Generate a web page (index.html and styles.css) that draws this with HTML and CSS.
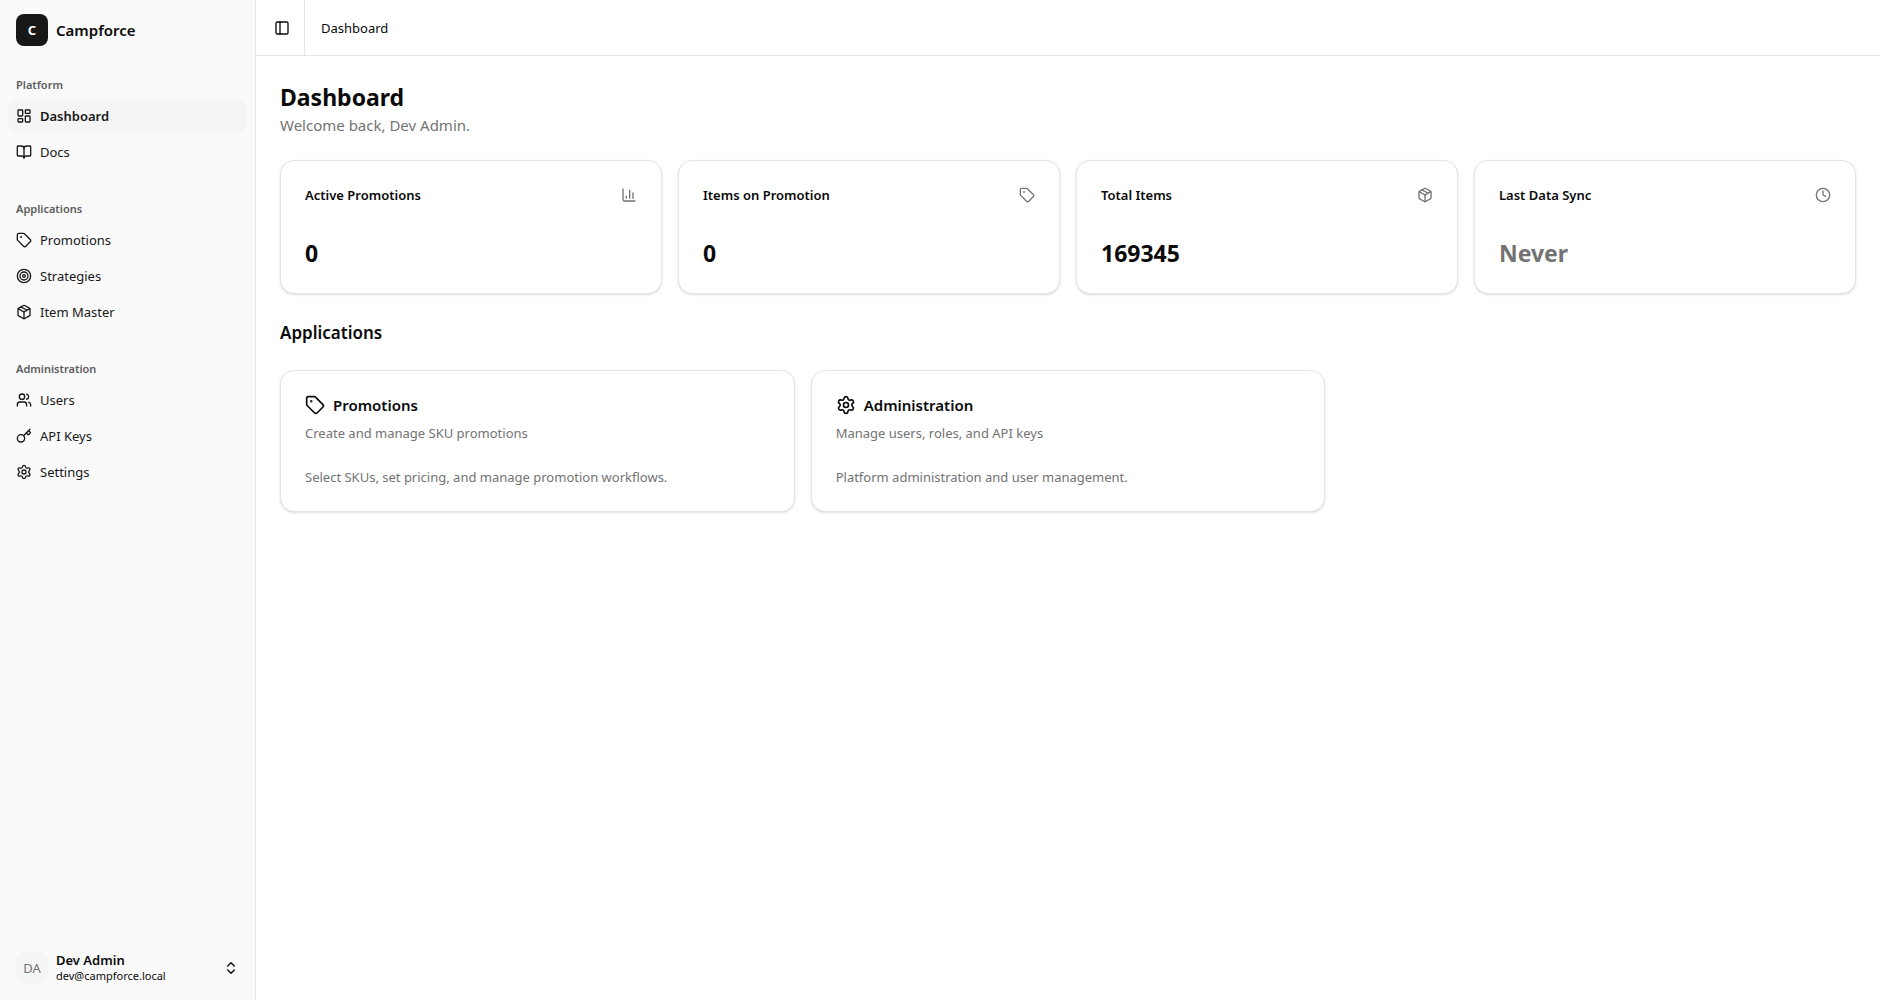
FILE: index.html
```html
<!DOCTYPE html>
<html lang="en">
  <head>
    <meta charset="UTF-8" />
    <meta name="viewport" content="width=device-width, initial-scale=1.0" />
    <title>Dashboard - Campforce</title>
    <link rel="stylesheet" href="styles.css">
  </head>
  <body>
    <!-- icons used more than once -->
    <svg class="sprite" aria-hidden="true">
      <symbol id="icon-tag" viewBox="0 0 24 24">
        <path d="M12.586 2.586A2 2 0 0 0 11.172 2H4a2 2 0 0 0-2 2v7.172a2 2 0 0 0 .586 1.414l8.704 8.704a2.426 2.426 0 0 0 3.42 0l6.58-6.58a2.426 2.426 0 0 0 0-3.42z" />
        <circle cx="7.5" cy="7.5" r=".5" fill="currentColor" />
      </symbol>
      <symbol id="icon-package" viewBox="0 0 24 24">
        <path d="M11 21.73a2 2 0 0 0 2 0l7-4A2 2 0 0 0 21 16V8a2 2 0 0 0-1-1.73l-7-4a2 2 0 0 0-2 0l-7 4A2 2 0 0 0 3 8v8a2 2 0 0 0 1 1.73z" />
        <path d="M12 22V12" />
        <path d="M3.29 7 12 12l8.71-5" />
        <path d="m7.5 4.27 9 5.15" />
      </symbol>
      <symbol id="icon-settings" viewBox="0 0 24 24">
        <path d="M9.671 4.136a2.34 2.34 0 0 1 4.659 0 2.34 2.34 0 0 0 3.319 1.915 2.34 2.34 0 0 1 2.33 4.033 2.34 2.34 0 0 0 0 3.831 2.34 2.34 0 0 1-2.33 4.033 2.34 2.34 0 0 0-3.319 1.915 2.34 2.34 0 0 1-4.659 0 2.34 2.34 0 0 0-3.32-1.915 2.34 2.34 0 0 1-2.33-4.033 2.34 2.34 0 0 0 0-3.831A2.34 2.34 0 0 1 6.35 6.051a2.34 2.34 0 0 0 3.319-1.915" />
        <circle cx="12" cy="12" r="3" />
      </symbol>
    </svg>

    <div class="app">
      <aside class="sidebar">
        <a href="#" class="brand">
          <span class="brand-logo">C</span>
          <span class="brand-name">Campforce</span>
        </a>

        <nav class="sidebar-nav">
          <div class="nav-group">
            <h2 class="nav-label">Platform</h2>
            <a href="#" class="nav-item active" aria-current="page">
              <svg class="icon" viewBox="0 0 24 24">
                <rect width="7" height="9" x="3" y="3" rx="1" />
                <rect width="7" height="5" x="14" y="3" rx="1" />
                <rect width="7" height="9" x="14" y="12" rx="1" />
                <rect width="7" height="5" x="3" y="16" rx="1" />
              </svg>
              <span>Dashboard</span>
            </a>
            <a href="#" class="nav-item">
              <svg class="icon" viewBox="0 0 24 24">
                <path d="M12 7v14" />
                <path d="M3 18a1 1 0 0 1-1-1V4a1 1 0 0 1 1-1h5a4 4 0 0 1 4 4 4 4 0 0 1 4-4h5a1 1 0 0 1 1 1v13a1 1 0 0 1-1 1h-6a3 3 0 0 0-3 3 3 3 0 0 0-3-3z" />
              </svg>
              <span>Docs</span>
            </a>
          </div>

          <div class="nav-group">
            <h2 class="nav-label">Applications</h2>
            <a href="#" class="nav-item">
              <svg class="icon"><use href="#icon-tag" /></svg>
              <span>Promotions</span>
            </a>
            <a href="#" class="nav-item">
              <svg class="icon" viewBox="0 0 24 24">
                <circle cx="12" cy="12" r="10" />
                <circle cx="12" cy="12" r="6" />
                <circle cx="12" cy="12" r="2" />
              </svg>
              <span>Strategies</span>
            </a>
            <a href="#" class="nav-item">
              <svg class="icon"><use href="#icon-package" /></svg>
              <span>Item Master</span>
            </a>
          </div>

          <div class="nav-group">
            <h2 class="nav-label">Administration</h2>
            <a href="#" class="nav-item">
              <svg class="icon" viewBox="0 0 24 24">
                <path d="M16 21v-2a4 4 0 0 0-4-4H6a4 4 0 0 0-4 4v2" />
                <path d="M16 3.128a4 4 0 0 1 0 7.744" />
                <path d="M22 21v-2a4 4 0 0 0-3-3.87" />
                <circle cx="9" cy="7" r="4" />
              </svg>
              <span>Users</span>
            </a>
            <a href="#" class="nav-item">
              <svg class="icon" viewBox="0 0 24 24">
                <path d="m15.5 7.5 2.3 2.3a1 1 0 0 0 1.4 0l2.1-2.1a1 1 0 0 0 0-1.4L19 4" />
                <path d="m21 2-9.6 9.6" />
                <circle cx="7.5" cy="15.5" r="5.5" />
              </svg>
              <span>API Keys</span>
            </a>
            <a href="#" class="nav-item">
              <svg class="icon"><use href="#icon-settings" /></svg>
              <span>Settings</span>
            </a>
          </div>
        </nav>

        <button type="button" class="user-menu">
          <span class="avatar">DA</span>
          <span class="user-info">
            <span class="user-name">Dev Admin</span>
            <span class="user-email">dev@campforce.local</span>
          </span>
          <svg class="icon" viewBox="0 0 24 24">
            <path d="m7 15 5 5 5-5" />
            <path d="m7 9 5-5 5 5" />
          </svg>
        </button>
      </aside>

      <div class="main">
        <header class="topbar">
          <div class="topbar-toggle">
            <button type="button" class="toggle-btn" aria-label="Toggle Sidebar">
              <svg class="icon" viewBox="0 0 24 24">
                <rect width="18" height="18" x="3" y="3" rx="2" />
                <path d="M9 3v18" />
              </svg>
            </button>
          </div>
          <nav class="breadcrumb" aria-label="Breadcrumb">Dashboard</nav>
        </header>

        <main class="content">
          <div class="page-heading">
            <h1>Dashboard</h1>
            <p>Welcome back, Dev Admin.</p>
          </div>

          <section class="stats">
            <div class="card stat">
              <div class="stat-header">
                <h3>Active Promotions</h3>
                <svg class="icon" viewBox="0 0 24 24">
                  <path d="M3 3v16a2 2 0 0 0 2 2h16" />
                  <path d="M18 17V9" />
                  <path d="M13 17V5" />
                  <path d="M8 17v-3" />
                </svg>
              </div>
              <p class="stat-value">0</p>
            </div>
            <div class="card stat">
              <div class="stat-header">
                <h3>Items on Promotion</h3>
                <svg class="icon"><use href="#icon-tag" /></svg>
              </div>
              <p class="stat-value">0</p>
            </div>
            <div class="card stat">
              <div class="stat-header">
                <h3>Total Items</h3>
                <svg class="icon"><use href="#icon-package" /></svg>
              </div>
              <p class="stat-value">169345</p>
            </div>
            <div class="card stat">
              <div class="stat-header">
                <h3>Last Data Sync</h3>
                <svg class="icon" viewBox="0 0 24 24">
                  <circle cx="12" cy="12" r="10" />
                  <path d="M12 6v6l4 2" />
                </svg>
              </div>
              <p class="stat-value muted">Never</p>
            </div>
          </section>

          <h2 class="section-title">Applications</h2>

          <section class="apps">
            <a href="#" class="card app-card">
              <h3 class="app-title">
                <svg class="icon icon-lg"><use href="#icon-tag" /></svg>
                Promotions
              </h3>
              <p>Create and manage SKU promotions</p>
              <p class="app-text">Select SKUs, set pricing, and manage promotion workflows.</p>
            </a>
            <a href="#" class="card app-card">
              <h3 class="app-title">
                <svg class="icon icon-lg"><use href="#icon-settings" /></svg>
                Administration
              </h3>
              <p>Manage users, roles, and API keys</p>
              <p class="app-text">Platform administration and user management.</p>
            </a>
          </section>
        </main>
      </div>
    </div>
  </body>
</html>
```
FILE: styles.css
```css
* {
  margin: 0;
  padding: 0;
  box-sizing: border-box;
}

body {
  font-family: "Segoe UI", "Noto Sans", "Open Sans", sans-serif;
  font-size: 13px;
  line-height: 20px;
  color: #0a0a0a;
  background-color: #ffffff;
}

a {
  color: inherit;
  text-decoration: none;
}

button {
  font: inherit;
  color: inherit;
  background: none;
  border: none;
  cursor: pointer;
}

.sprite {
  display: none;
}

.icon {
  width: 16px;
  height: 16px;
  flex-shrink: 0;
  fill: none;
  stroke: currentColor;
  stroke-width: 2;
  stroke-linecap: round;
  stroke-linejoin: round;
}

.icon-lg {
  width: 20px;
  height: 20px;
}

.app {
  display: flex;
  min-height: 100vh;
}

/* Sidebar */
.sidebar {
  display: flex;
  flex-direction: column;
  flex-shrink: 0;
  width: 256px;
  background-color: #fafafa;
  border-right: 1px solid #e5e5e5;
}

.brand {
  display: flex;
  align-items: center;
  gap: 8px;
  padding: 14px 16px;
}

.brand-logo,
.avatar {
  display: flex;
  align-items: center;
  justify-content: center;
  width: 32px;
  height: 32px;
  border-radius: 8px;
}

.brand-logo {
  background-color: #171717;
  color: #fafafa;
  font-weight: 700;
}

.brand-name {
  font-size: 15px;
  font-weight: 600;
}

.sidebar-nav {
  display: flex;
  flex-direction: column;
  flex: 1;
  gap: 8px;
}

.nav-group {
  display: flex;
  flex-direction: column;
  gap: 4px;
  padding: 8px;
}

.nav-label {
  height: 28px;
  padding: 0 8px;
  font-size: 11px;
  font-weight: 600;
  line-height: 34px;
  color: #5c5c5c;
}

.nav-item {
  display: flex;
  align-items: center;
  gap: 8px;
  height: 32px;
  padding: 0 8px;
  border-radius: 8px;
  color: #171717;
}

.nav-item:hover,
.nav-item.active {
  background-color: #f5f5f5;
}

.nav-item.active {
  font-weight: 600;
}

.user-menu {
  display: flex;
  align-items: center;
  gap: 8px;
  margin: 8px;
  padding: 8px;
  border-radius: 8px;
  text-align: left;
}

.avatar {
  background-color: #f5f5f5;
  color: #737373;
}

.user-info {
  display: flex;
  flex-direction: column;
  flex: 1;
  line-height: 16px;
}

.user-name {
  font-weight: 600;
}

.user-email {
  font-size: 11px;
}

/* Main area */
.main {
  display: flex;
  flex-direction: column;
  flex: 1;
  min-width: 0;
}

.topbar {
  display: flex;
  height: 56px;
  border-bottom: 1px solid #e5e5e5;
}

.topbar-toggle {
  display: flex;
  align-items: center;
  padding: 0 8px 0 12px;
  border-right: 1px solid #e5e5e5;
}

.toggle-btn {
  display: flex;
  align-items: center;
  justify-content: center;
  width: 28px;
  height: 28px;
  border-radius: 6px;
}

.toggle-btn:hover {
  background-color: #f5f5f5;
}

.breadcrumb {
  display: flex;
  align-items: center;
  padding: 0 16px;
}

.content {
  display: flex;
  flex-direction: column;
  gap: 24px;
  padding: 24px;
}

.page-heading h1 {
  font-size: 23px;
  font-weight: 700;
  line-height: 34px;
}

.page-heading p {
  font-size: 15px;
  line-height: 22px;
  color: #737373;
}

.card {
  padding: 24px;
  border: 1px solid #e5e5e5;
  border-radius: 14px;
  background-color: #ffffff;
  box-shadow: 0 1px 3px rgba(0, 0, 0, 0.1), 0 1px 2px -1px rgba(0, 0, 0, 0.1);
}

.stats {
  display: grid;
  grid-template-columns: repeat(4, 1fr);
  gap: 16px;
}

.stat {
  display: flex;
  flex-direction: column;
  gap: 32px;
}

.stat-header {
  display: flex;
  align-items: center;
  justify-content: space-between;
}

.stat-header h3 {
  font-size: 13px;
  font-weight: 600;
}

.stat-header .icon {
  color: #737373;
}

.stat-value {
  font-size: 23px;
  font-weight: 700;
  line-height: 32px;
}

.muted {
  color: #737373;
}

.section-title {
  padding-top: 2px;
  font-size: 17px;
  font-weight: 600;
  line-height: 26px;
}

.apps {
  display: grid;
  grid-template-columns: repeat(3, 1fr);
  gap: 16px;
}

.app-card {
  display: flex;
  flex-direction: column;
  color: #737373;
}

.app-title {
  display: flex;
  align-items: center;
  gap: 8px;
  margin-bottom: 8px;
  font-size: 15px;
  font-weight: 600;
  color: #0a0a0a;
}

.app-text {
  margin-top: 24px;
}
```
